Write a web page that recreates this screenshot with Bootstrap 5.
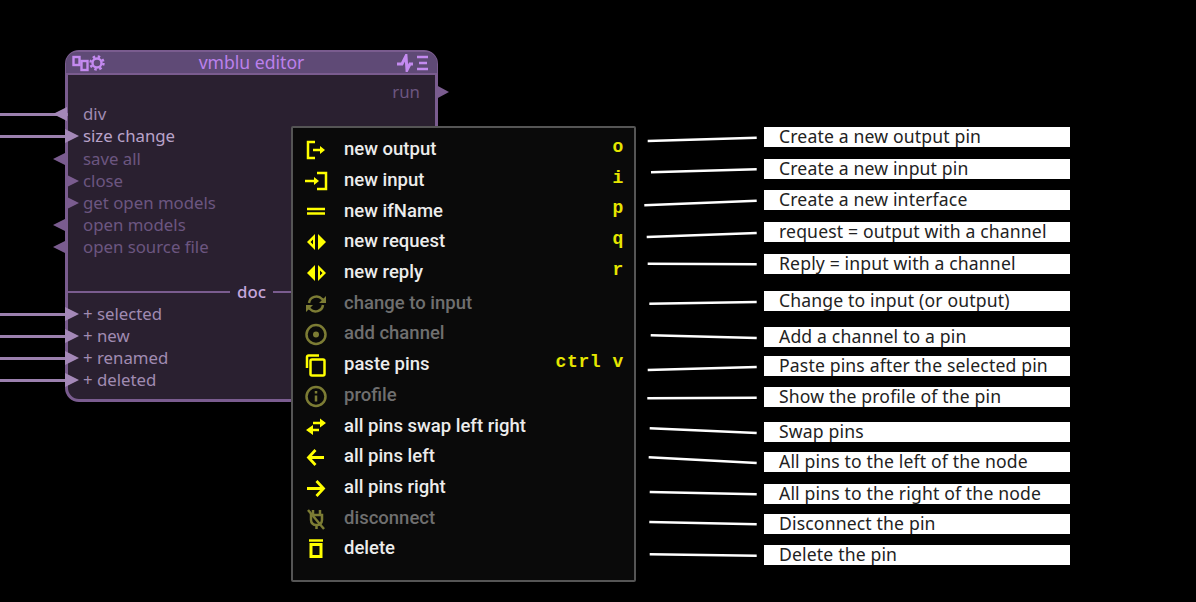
<!DOCTYPE html>
<html lang="en">
<head>
  <meta charset="UTF-8">
  <title>vmblu pin context menu</title>
  <link href="https://cdn.jsdelivr.net/npm/bootstrap@5.3.0/dist/css/bootstrap.min.css" rel="stylesheet">
  <style>
    body { background: #000; }
    .stage { width: 1196px; height: 602px; overflow: hidden; }

    /* node */
    .node-box { left: 65px; top: 50px; width: 373px; height: 352px; background: #2a2030; border: 3px solid #7a5c8f; border-radius: 14px; font-family: "Noto Sans", sans-serif; font-size: 16.8px; }
    .node-head { height: 21px; background: #5f4a76; margin: -1px -2px 0; padding: 0 6px; border-radius: 11px 11px 0 0; color: #bb80ec; box-shadow: 0 2px 0 #7a5c8f; }
    .node-title { font-size: 17.6px; line-height: 21px; }
    .node-pins { padding-top: 8px; }
    .pin-row { position: relative; height: 22.2px; line-height: 21px; padding-left: 15px; color: #6c5680; white-space: nowrap; }
    .pin-row.lit { color: #a08bb2; }
    .pin-row.hot { color: #b9a3ca; }
    .pin-tri { position: absolute; top: 4px; width: 0; height: 0; border-top: 7px solid transparent; border-bottom: 7px solid transparent; }
    .tri-in { left: -3px; border-left: 14px solid #7a5c8f; }
    .tri-out { left: -15px; border-right: 14px solid #7a5c8f; }
    .tri-run { right: -14px; border-left: 13px solid #7a5c8f; }
    .lit .tri-in, .lit .tri-out, .hot .tri-in { border-left-color: #a488b8; border-right-color: #a488b8; }
    .pin-wire { position: absolute; left: -68px; top: 10px; width: 68px; height: 3px; background: #9b80ae; }
    .run-row { padding-left: 0; padding-right: 15px; text-align: right; }
    .doc-row { margin: 22px -3px 0 -3px; height: 22px; line-height: 22px; color: #c4a6dc; font-weight: 500; }
    .doc-rule { flex: 1 1 0; height: 2px; background: #7a5c8f; }
    .doc-name { padding: 0 7px; }

    /* menu */
    .pin-menu { left: 291px; top: 126px; width: 345px; height: 456px; background: #0a0a0a; border: 2px solid #555; border-radius: 2px; padding: 6.6px 10px 0 11px; font-family: Roboto, sans-serif; font-weight: 500; font-size: 18.5px; color: #ececec; }
    .menu-row { height: 30.73px; }
    .menu-row.off { color: #6f6f6f; }
    .menu-ico { width: 24px; height: 24px; flex: none; margin-right: 16px; fill: none; stroke: #ff0; stroke-width: 2.5; }
    .menu-row.off .menu-ico { stroke: #7c7c34; }
    .menu-ico .ico-solid { fill: #ff0; stroke: none; }
    .menu-row.off .menu-ico .ico-solid { fill: #7c7c34; }
    .menu-key { margin-left: auto; margin-bottom: 5px; color: #e6e600; font-family: "Liberation Mono", monospace; font-weight: 700; font-size: 18px; letter-spacing: .6px; }

    /* annotations */
    .note-lines { left: 0; top: 0; }
    .note-col { left: 764px; top: 127px; width: 306px; font-family: "Noto Sans", sans-serif; font-size: 17.6px; letter-spacing: .15px; color: #222; }
    .note-item { height: 20px; line-height: 18px; padding-left: 15px; background: #fff; white-space: nowrap; }
    .note-item:nth-child(n+2) { margin-top: 12px; }
    .note-item:nth-child(3) { margin-top: 11px; }
    .note-item:nth-child(6) { margin-top: 17px; }
    .note-item:nth-child(7) { margin-top: 16px; }
    .note-item:nth-child(8) { margin-top: 9px; }
    .note-item:nth-child(9) { margin-top: 11px; }
    .note-item:nth-child(10) { margin-top: 15px; }
    .note-item:nth-child(11) { margin-top: 10px; }
    .note-item:nth-child(13) { margin-top: 10px; }
    .note-item:nth-child(14) { margin-top: 11px; }
  </style>
</head>
<body>
  <div class="stage position-relative">

    <!-- node behind the menu -->
    <div class="node-box position-absolute">
      <div class="node-head d-flex align-items-center justify-content-between">
        <svg width="34" height="18" viewBox="0 0 34 18" fill="none" stroke="#c48af0" stroke-width="2.400">
          <rect x="1.500" y="3" width="6" height="8"/><rect x="9.500" y="7" width="6" height="9"/>
          <circle cx="25" cy="9" r="4.500"/><circle cx="25" cy="9" r="6.500" stroke-width="2.400" stroke-dasharray="2.500 2.600"/>
        </svg>
        <span class="node-title">vmblu editor</span>
        <svg width="34" height="18" viewBox="0 0 34 18" fill="none" stroke="#c48af0" stroke-width="2.400">
          <path d="M0 10h5l4-8 1 14 3-6h3" stroke-width="3"/>
          <path d="M20 3h11M22 9h8M20 15h11"/>
        </svg>
      </div>
      <div class="node-pins">
        <div class="pin-row run-row">run<span class="pin-tri tri-run"></span></div>
        <div class="pin-row lit"><span class="pin-wire"></span><span class="pin-tri tri-out"></span>div</div>
        <div class="pin-row hot"><span class="pin-wire"></span><span class="pin-tri tri-in"></span>size change</div>
        <div class="pin-row"><span class="pin-tri tri-out"></span>save all</div>
        <div class="pin-row"><span class="pin-tri tri-in"></span>close</div>
        <div class="pin-row"><span class="pin-tri tri-in"></span>get open models</div>
        <div class="pin-row"><span class="pin-tri tri-out"></span>open models</div>
        <div class="pin-row"><span class="pin-tri tri-out"></span>open source file</div>
        <div class="doc-row d-flex align-items-center"><span class="doc-rule"></span><span class="doc-name">doc</span><span class="doc-rule"></span></div>
        <div class="pin-row lit"><span class="pin-wire"></span><span class="pin-tri tri-in"></span>+ selected</div>
        <div class="pin-row lit"><span class="pin-wire"></span><span class="pin-tri tri-in"></span>+ new</div>
        <div class="pin-row lit"><span class="pin-wire"></span><span class="pin-tri tri-in"></span>+ renamed</div>
        <div class="pin-row lit"><span class="pin-wire"></span><span class="pin-tri tri-in"></span>+ deleted</div>
      </div>
    </div>

    <!-- context menu -->
    <div class="pin-menu position-absolute">
      <div class="menu-row d-flex align-items-center">
        <svg class="menu-ico" viewBox="0 0 24 24"><path d="M11 4H4v16h7"/><path d="M9 12h8"/><path class="ico-solid" d="M16 8l5 4-5 4z"/></svg>
        new output<span class="menu-key">o</span>
      </div>
      <div class="menu-row d-flex align-items-center">
        <svg class="menu-ico" viewBox="0 0 24 24"><path d="M13 4h9v16h-9"/><path d="M1 12h10"/><path class="ico-solid" d="M10 8l5 4-5 4z"/></svg>
        new input<span class="menu-key">i</span>
      </div>
      <div class="menu-row d-flex align-items-center">
        <svg class="menu-ico" viewBox="0 0 24 24"><path d="M3 10h18M3 14.500h18"/></svg>
        new ifName<span class="menu-key">p</span>
      </div>
      <div class="menu-row d-flex align-items-center">
        <svg class="menu-ico" viewBox="0 0 24 24"><path class="ico-solid" fill-rule="evenodd" d="M11 4v16L3 12zM9 9.500v5L6.500 12z"/><path class="ico-solid" d="M14 4l8 8-8 8z"/></svg>
        new request<span class="menu-key">q</span>
      </div>
      <div class="menu-row d-flex align-items-center">
        <svg class="menu-ico" viewBox="0 0 24 24"><path class="ico-solid" d="M11 4v16L3 12z"/><path class="ico-solid" fill-rule="evenodd" d="M14 4l8 8-8 8zM16 9.500v5l2.500-2.500z"/></svg>
        new reply<span class="menu-key">r</span>
      </div>
      <div class="menu-row off d-flex align-items-center">
        <svg class="menu-ico" viewBox="0 0 24 24"><path d="M5 11a7.500 7.500 0 0 1 13-4l2 2"/><path d="M19 13a7.500 7.500 0 0 1-13 4l-2-2"/><path class="ico-solid" d="M22 4v7h-7zM2 20v-7h7z"/></svg>
        change to input
      </div>
      <div class="menu-row off d-flex align-items-center">
        <svg class="menu-ico" viewBox="0 0 24 24"><circle cx="12" cy="12.500" r="9.500"/><circle class="ico-solid" cx="12" cy="12.500" r="3"/></svg>
        add channel
      </div>
      <div class="menu-row d-flex align-items-center">
        <svg class="menu-ico" viewBox="0 0 24 24"><path d="M3 15V4a1.500 1.500 0 0 1 1.500-1.500H15"/><rect x="6.500" y="6.500" width="14" height="16" rx="1.500"/></svg>
        paste pins<span class="menu-key">ctrl v</span>
      </div>
      <div class="menu-row off d-flex align-items-center">
        <svg class="menu-ico" viewBox="0 0 24 24"><circle cx="12" cy="12.500" r="9.500"/><path d="M12 11.500v6M12 7v2.500"/></svg>
        profile
      </div>
      <div class="menu-row d-flex align-items-center">
        <svg class="menu-ico" viewBox="0 0 24 24"><path d="M9 9h8M6 16h9"/><path class="ico-solid" d="M16 4.500l6 4.500-6 4.500zM9 11l-7 5 7 5z"/></svg>
        all pins swap left right
      </div>
      <div class="menu-row d-flex align-items-center">
        <svg class="menu-ico" viewBox="0 0 24 24"><path d="M20 12.500H5M11.500 5l-7 7.500 7 7.500" stroke-width="2.800"/></svg>
        all pins left
      </div>
      <div class="menu-row d-flex align-items-center">
        <svg class="menu-ico" viewBox="0 0 24 24"><path d="M3 12.500h16M12.500 5l7 7.500-7 7.500" stroke-width="2.800"/></svg>
        all pins right
      </div>
      <div class="menu-row off d-flex align-items-center">
        <svg class="menu-ico" viewBox="0 0 24 24"><path d="M4 3l16 19"/><path d="M9 3v5M16 3v5M7 8h11v5a5 5 0 0 1-5.500 5A5 5 0 0 1 7 13zM12.500 18v4"/></svg>
        disconnect
      </div>
      <div class="menu-row d-flex align-items-center">
        <svg class="menu-ico" viewBox="0 0 24 24"><path d="M5 3.500h14"/><rect x="7" y="7.500" width="10" height="12" stroke-width="3"/></svg>
        delete
      </div>
    </div>

    <!-- annotation leader lines -->
    <svg class="note-lines position-absolute" width="1196" height="602" fill="none" stroke="#fff" stroke-width="2.500">
      <path d="M647.700 141L756.700 137.700"/>
      <path d="M651 172.300L756.700 169.300"/>
      <path d="M644.300 205.300L756.700 200.700"/>
      <path d="M646.700 237L756.700 233"/>
      <path d="M647.700 263.700L756.700 264.300"/>
      <path d="M649.300 303.700L756.700 302"/>
      <path d="M650.700 335.300L756.700 338"/>
      <path d="M647.700 370L756.700 367"/>
      <path d="M647.300 398.300L756.700 397.700"/>
      <path d="M649.700 428.300L756.700 433"/>
      <path d="M648.700 457.300L756.700 463"/>
      <path d="M649.700 492L756.700 494.300"/>
      <path d="M649.300 522L756.700 524.300"/>
      <path d="M649.700 554.300L756.700 555.700"/>
    </svg>

    <!-- annotation labels -->
    <div class="note-col position-absolute">
      <div class="note-item">Create a new output pin</div>
      <div class="note-item">Create a new input pin</div>
      <div class="note-item">Create a new interface</div>
      <div class="note-item">request = output with a channel</div>
      <div class="note-item">Reply = input with a channel</div>
      <div class="note-item">Change to input (or output)</div>
      <div class="note-item">Add a channel to a pin</div>
      <div class="note-item">Paste pins after the selected pin</div>
      <div class="note-item">Show the profile of the pin</div>
      <div class="note-item">Swap pins</div>
      <div class="note-item">All pins to the left of the node</div>
      <div class="note-item">All pins to the right of the node</div>
      <div class="note-item">Disconnect the pin</div>
      <div class="note-item">Delete the pin</div>
    </div>
  </div>

  <script src="https://cdn.jsdelivr.net/npm/bootstrap@5.3.0/dist/js/bootstrap.bundle.min.js"></script>
</body>
</html>
